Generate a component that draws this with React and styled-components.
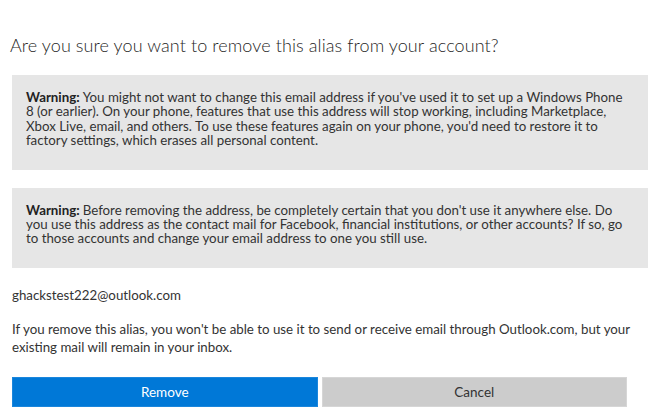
import React from 'react'
import styled, { createGlobalStyle } from 'styled-components'

const GlobalStyle = createGlobalStyle`
  html, body {
    margin: 0;
    padding: 0;
    background: #ffffff;
  }
  body {
    font-family: Lato, "Open Sans", "Liberation Sans", sans-serif;
    color: #2b2b2b;
  }
`

const Dialog = styled.div`
  width: 660px;
  height: 419px;
  box-sizing: border-box;
  padding: 34px 12px 0 12px;
  display: flex;
  flex-direction: column;
  background: #fff;
`

const Title = styled.h1`
  margin: 0 0 0 -2px;
  font-size: 18px;
  font-weight: 300;
  line-height: 22px;
  color: #1f1f1f;
  letter-spacing: 0.1px;
`

const Warning = styled.div`
  margin-top: ${p => p.$top}px;
  background: #e6e6e6;
  padding: 15px ${p => p.$right}px 22px 14px;
  font-size: 13.3px;
  line-height: 14.4px;
  color: #333;
`

const Strong = styled.b`
  font-weight: 700;
  color: #222;
  margin-right: 3px;
`

const Email = styled.div`
  margin-top: 19px;
  font-size: 13.3px;
  line-height: 16px;
  color: #333;
`

const Note = styled.p`
  margin: 17px 0 0 0;
  font-size: 13.3px;
  line-height: 18px;
  color: #333;
  padding-right: 8px;
`

const Buttons = styled.div`
  margin-top: 21px;
  display: flex;
  gap: 4px;
  width: 615px;
`

const Button = styled.button`
  flex: 1;
  height: 30px;
  border: 1px solid ${p => (p.$primary ? '#1a86dc' : '#d6d6d6')};
  background: ${p => (p.$primary ? '#0078d7' : '#cccccc')};
  color: ${p => (p.$primary ? '#ffffff' : '#333333')};
  font-family: Lato, "Open Sans", "Liberation Sans", sans-serif;
  font-size: 13.5px;
  padding: 0;
  cursor: pointer;
`

export default function App() {
  return (
    <>
      <GlobalStyle />
      <Dialog>
        <Title>Are you sure you want to remove this alias from your account?</Title>
        <Warning $top={19} $right={18}>
          <Strong>Warning:</Strong>You might not want to change this email address if you've used it to set up a Windows Phone
          8 (or earlier). On your phone, features that use this address will stop working, including Marketplace,
          Xbox Live, email, and others. To use these features again on your phone, you'd need to restore it to
          factory settings, which erases all personal content.
        </Warning>
        <Warning $top={18} $right={14}>
          <Strong>Warning:</Strong>Before removing the address, be completely certain that you don't use it anywhere else. Do
          you use this address as the contact mail for Facebook, financial institutions, or other accounts? If so, go
          to those accounts and change your email address to one you still use.
        </Warning>
        <Email>ghackstest222@outlook.com</Email>
        <Note>
          If you remove this alias, you won't be able to use it to send or receive email through Outlook.com, but your
          existing mail will remain in your inbox.
        </Note>
        <Buttons>
          <Button $primary>Remove</Button>
          <Button>Cancel</Button>
        </Buttons>
      </Dialog>
    </>
  )
}
